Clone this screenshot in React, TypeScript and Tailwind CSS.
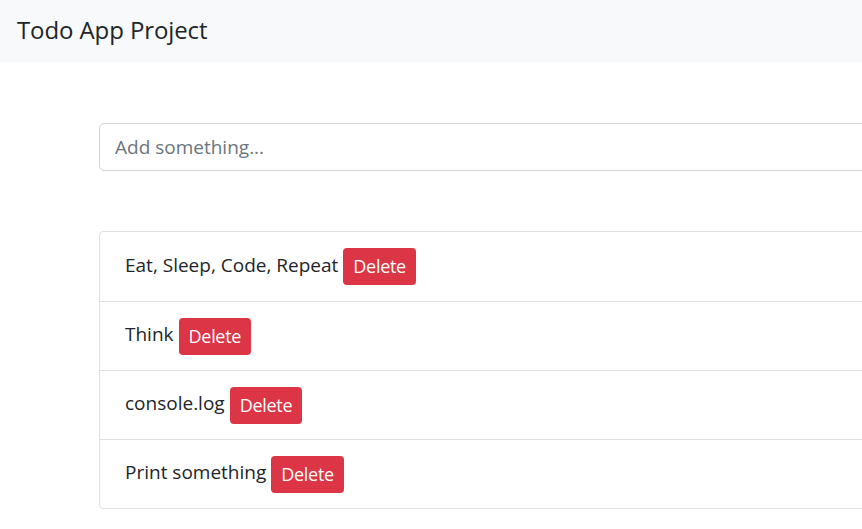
const todos = ["Eat, Sleep, Code, Repeat", "Think", "console.log", "Print something"];

export default function App() {
  return (
    <div className="w-full min-h-screen overflow-hidden bg-white text-[#212529] font-['Open_Sans',sans-serif]">
      {/* Navbar */}
      <nav className="h-[62px] bg-[#f8f9fa] flex items-center px-[17px]">
        <span className="text-[24px] tracking-[-0.1px] -mt-[2px]">Todo App Project</span>
      </nav>

      <div className="pl-[99px] pt-[61px]">
        <div className="w-[1000px]">
          <input
            type="text"
            placeholder="Add something..."
            className="w-full h-[48px] px-[15px] text-[19px] border border-[#ced4da] rounded-[5px] outline-none placeholder:text-[#6c757d]"
          />

          <ul className="mt-[60px] border border-[#dee2e6] rounded-[4px]">
            {todos.map((t, i) => (
              <li
                key={i}
                className={
                  "h-[69px] pl-[25px] flex items-center text-[19px] " +
                  (i > 0 ? "border-t border-[#dee2e6]" : "")
                }
              >
                <span className="-mt-[3px]">{t}</span>
                <button className="ml-[5px] h-[37px] px-[10px] bg-[#dc3545] text-white text-[18px] tracking-[-0.3px] rounded-[4px]">
                  Delete
                </button>
              </li>
            ))}
          </ul>
        </div>
      </div>
    </div>
  );
}
